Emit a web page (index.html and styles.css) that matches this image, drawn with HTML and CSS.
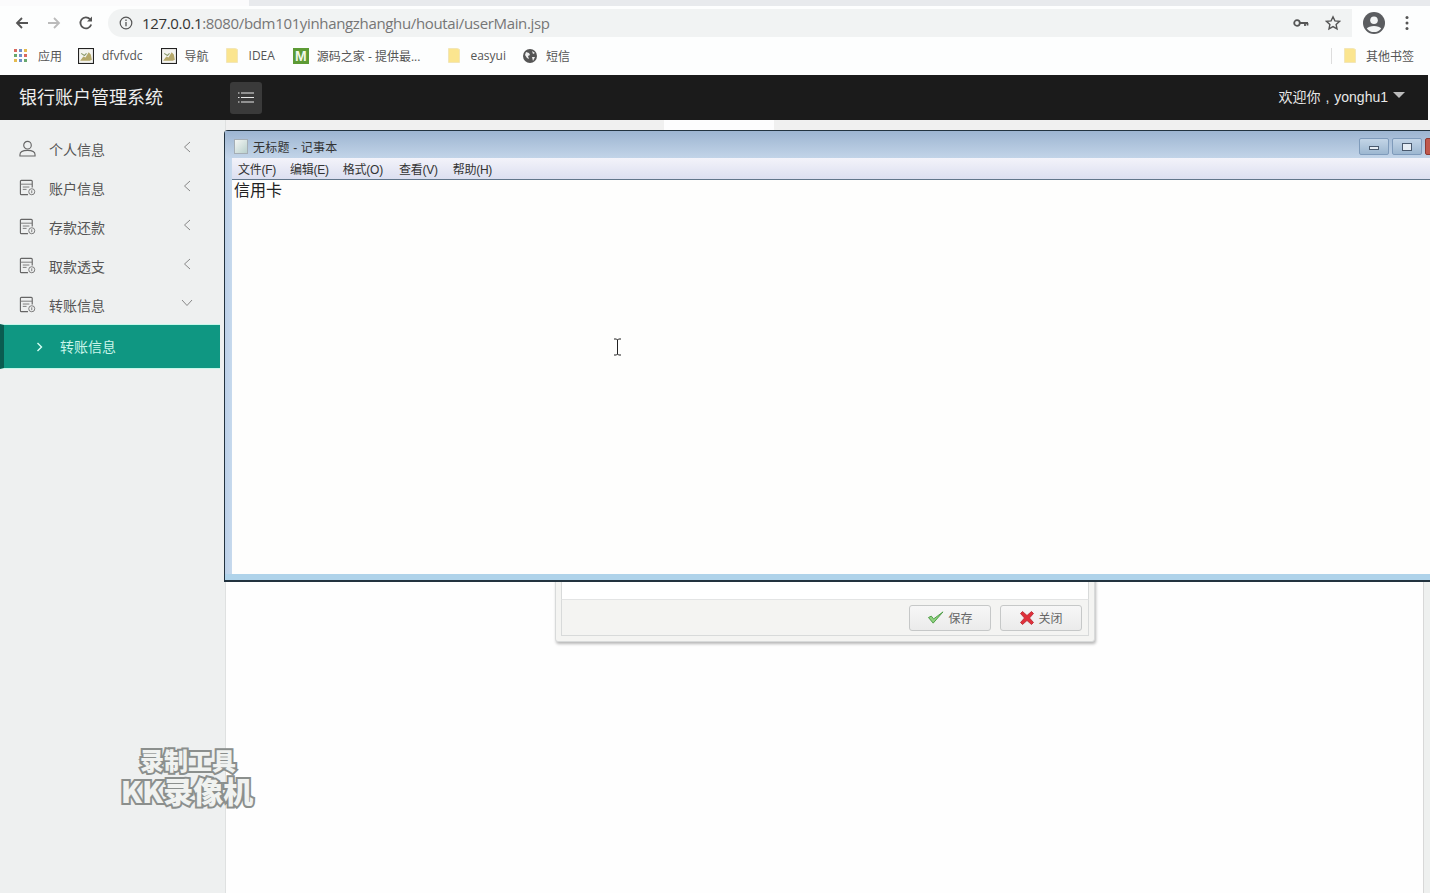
FILE: index.html
```html
<!DOCTYPE html>
<html lang="zh">
<head>
<meta charset="utf-8">
<title>银行账户管理系统</title>
<link rel="stylesheet" href="styles.css">
</head>
<body>
<svg class="defs" width="0" height="0" aria-hidden="true">
  <symbol id="doc" viewBox="0 0 18 18">
    <path d="M14 9V2.500a1 1 0 0 0-1-1H2.500a1 1 0 0 0-1 1v13a1 1 0 0 0 1 1h7" fill="none" stroke="#666" stroke-width="1.200"/>
    <path d="M1.500 5.500h12.500M4 8.500h7M4 11h4" fill="none" stroke="#777" stroke-width="1"/>
    <circle cx="13.500" cy="13.500" r="3.200" fill="none" stroke="#777" stroke-width="1"/>
    <path d="M13.500 12v3" stroke="#777" stroke-width="1"/>
  </symbol>
  <symbol id="pic" viewBox="0 0 15 15">
    <rect x=".5" y=".5" width="14" height="14" fill="#f4f4f0" stroke="#222"/>
    <path d="M2 12l3-4 2 1 3-5 2 2 1 5-2 1z" fill="#b5a86a"/>
    <path d="M3 5l3 2 2-2" fill="none" stroke="#8b9a6b"/>
  </symbol>
  <symbol id="folder" viewBox="0 0 12 15">
    <path d="M.5.5h9l2 1v13H.5z" fill="#fbe58f" stroke="#f2e6b8"/>
  </symbol>
</svg>

<div class="browser">
  <div class="tabstrip"><div class="tab"></div></div>
  <div class="toolbar">
    <svg class="nav" viewBox="0 0 16 16"><path d="M14 8H3M8 3 3 8l5 5" fill="none" stroke="#555" stroke-width="1.800"/></svg>
    <svg class="nav" viewBox="0 0 16 16"><path d="M2 8h11M8 3l5 5-5 5" fill="none" stroke="#bbb" stroke-width="1.800"/></svg>
    <svg class="nav" viewBox="0 0 16 16"><path d="M13.200 9.500A5.500 5.500 0 1 1 12 4.200" fill="none" stroke="#555" stroke-width="1.800"/><path d="M14 1.500v5H9z" fill="#555"/></svg>
    <div class="omnibox">
      <svg class="info" viewBox="0 0 14 14"><circle cx="7" cy="7" r="5.800" fill="none" stroke="#555" stroke-width="1.200"/><path d="M7 6v4.200M7 3.600v1.300" stroke="#555" stroke-width="1.300"/></svg>
      <span class="url"><span class="url-host">127.0.0.1</span>:8080/bdm101yinhangzhanghu/houtai/userMain.jsp</span>
      <svg class="key" viewBox="0 0 16 10"><circle cx="4" cy="5" r="2.800" fill="none" stroke="#555" stroke-width="1.800"/><path d="M7 5h8M12 5v3M14.500 5v2.500" stroke="#555" stroke-width="1.800"/></svg>
      <svg class="star" viewBox="0 0 16 16"><path d="M8 1.800l1.900 4.100 4.500.5-3.300 3 .9 4.500L8 11.600l-4 2.300.9-4.500-3.300-3 4.500-.5z" fill="none" stroke="#555" stroke-width="1.400"/></svg>
    </div>
    <svg class="avatar" viewBox="0 0 22 22"><circle cx="11" cy="11" r="11" fill="#5b5d60"/><circle cx="11" cy="8.300" r="3.800" fill="#f3f5f5"/><path d="M3.800 16.500c2-3.400 12.400-3.400 14.400 0a9 9 0 0 1-14.400 0z" fill="#f3f5f5"/></svg>
    <svg class="dots" viewBox="0 0 4 16"><circle cx="2" cy="2.500" r="1.500" fill="#555"/><circle cx="2" cy="8" r="1.500" fill="#555"/><circle cx="2" cy="13.500" r="1.500" fill="#555"/></svg>
  </div>
  <div class="bookmarks">
    <div class="bm bm-apps">
      <span class="apps"><i class="c1"></i><i class="c2"></i><i class="c3"></i><i class="c4"></i><i class="c2"></i><i class="c1"></i><i class="c3"></i><i class="c2"></i><i class="c4"></i></span>
      <span>应用</span>
    </div>
    <div class="bm bm-dfv"><svg class="bm-ico"><use href="#pic"/></svg><span>dfvfvdc</span></div>
    <div class="bm"><svg class="bm-ico"><use href="#pic"/></svg><span>导航</span></div>
    <div class="bm bm-idea"><svg class="bm-fold"><use href="#folder"/></svg><span>IDEA</span></div>
    <div class="bm bm-m"><span class="m-ico">M</span><span>源码之家 - 提供最...</span></div>
    <div class="bm bm-easy"><svg class="bm-fold"><use href="#folder"/></svg><span>easyui</span></div>
    <div class="bm bm-sms"><svg class="globe" viewBox="0 0 14 14"><circle cx="7" cy="7" r="7" fill="#555"/><path d="M3 3l3 1 1 2-2 1 1 3-2-1-2-3zM9 2l3 2-2 1zM9 8l3 0-2 4z" fill="#eee"/></svg><span>短信</span></div>
    <div class="bm bm-other"><svg class="bm-fold"><use href="#folder"/></svg><span>其他书签</span></div>
  </div>
</div>

<header class="topbar">
  <div class="brand">银行账户管理系统</div>
  <button class="menu-btn" aria-label="menu">
    <svg viewBox="0 0 16 11" width="16" height="11"><path d="M0 1h1.500M3 1h13M0 5.500h1.500M3 5.500h13M0 10h1.500M3 10h13" stroke="#e8e8e8" stroke-width="1.200"/></svg>
  </button>
  <div class="user"><span class="user-name">欢迎你 , yonghu1</span><span class="caret"></span></div>
</header>

<div class="body">
  <aside class="sidebar">
    <div class="item">
      <svg class="ico" viewBox="0 0 18 18"><circle cx="9" cy="5.500" r="4" fill="none" stroke="#666" stroke-width="1.200"/><path d="M1 17v-1.500c0-3 3.500-4.500 8-4.500s8 1.500 8 4.500V17z" fill="none" stroke="#666" stroke-width="1.200"/></svg>
      <span class="label">个人信息</span>
      <svg class="chev" viewBox="0 0 8 12"><path d="M7 1 1.500 6 7 11" fill="none" stroke="#888" stroke-width="1"/></svg>
    </div>
    <div class="item">
      <svg class="ico"><use href="#doc"/></svg>
      <span class="label">账户信息</span>
      <svg class="chev" viewBox="0 0 8 12"><path d="M7 1 1.500 6 7 11" fill="none" stroke="#888" stroke-width="1"/></svg>
    </div>
    <div class="item">
      <svg class="ico"><use href="#doc"/></svg>
      <span class="label">存款还款</span>
      <svg class="chev" viewBox="0 0 8 12"><path d="M7 1 1.500 6 7 11" fill="none" stroke="#888" stroke-width="1"/></svg>
    </div>
    <div class="item">
      <svg class="ico"><use href="#doc"/></svg>
      <span class="label">取款透支</span>
      <svg class="chev" viewBox="0 0 8 12"><path d="M7 1 1.500 6 7 11" fill="none" stroke="#888" stroke-width="1"/></svg>
    </div>
    <div class="item">
      <svg class="ico"><use href="#doc"/></svg>
      <span class="label">转账信息</span>
      <svg class="chev chev-down" viewBox="0 0 12 8"><path d="M1 1l5 5.500L11 1" fill="none" stroke="#888" stroke-width="1"/></svg>
    </div>
    <div class="sub-active">
      <svg class="sub-chev" viewBox="0 0 7 10"><path d="M1.500 1l4 4-4 4" fill="none" stroke="#d8fff5" stroke-width="1.400"/></svg>
      <span class="sub-label">转账信息</span>
    </div>
    <div class="watermark">
      <div class="wm-a">录制工具</div>
      <div class="wm-b">KK录像机</div>
    </div>
  </aside>

  <main class="content">
    <div class="strip"></div>
    <div class="dialog">
      <div class="dialog-foot">
        <button class="dbtn">
          <svg viewBox="0 0 18 16" width="17" height="15"><path d="M1.500 8l5 6L17 2 7 9.500 4.500 6.500z" fill="#8fd27f" stroke="#4c9a44" stroke-width="1"/></svg>
          <span>保存</span>
        </button>
        <button class="dbtn dbtn-close">
          <svg viewBox="0 0 16 16" width="16" height="16"><path d="M1.500 3.500l2-2L8 5.500l4.500-4 2 2L10.500 8l4 4.500-2 2L8 10.500l-4.500 4-2-2L5.500 8z" fill="#e0303a" stroke="#b4222c" stroke-width=".8"/></svg>
          <span>关闭</span>
        </button>
      </div>
    </div>
    <div class="notepad">
      <div class="np-title">
        <span class="np-ico"></span>
        <span class="np-name">无标题 - 记事本</span>
        <span class="np-btn"><i class="min"></i></span>
        <span class="np-btn"><i class="max"></i></span>
        <span class="np-btn np-close"></span>
      </div>
      <div class="np-inner">
        <div class="np-menu">
          <span>文件(F)</span><span>编辑(E)</span><span>格式(O)</span><span>查看(V)</span><span>帮助(H)</span>
        </div>
        <div class="np-text">信用卡</div>
      </div>
      <svg class="ibeam" viewBox="0 0 9 18" width="9" height="18"><path d="M1 1h2.500l1 1 1-1H8M4.500 2v14M1 17h2.500l1-1 1 1H8" fill="none" stroke="#222" stroke-width="1"/></svg>
    </div>
  </main>
</div>
</body>
</html>
```
FILE: styles.css
```css
* { box-sizing: border-box; }
html, body { margin: 0; height: 893px; overflow: hidden; }
body {
  width: 1430px;
  background: #fff;
  font-family: "Liberation Sans", "Noto Sans CJK SC", sans-serif;
  color: #555;
}
.defs { position: absolute; }

/* browser chrome */
.browser { height: 75px; background: #fdfefe; display: flex; flex-direction: column; }
.tabstrip { height: 6px; background: #fbfbfc; padding-left: 249px; }
.tab { height: 6px; background: #e8eaed; }
.toolbar { height: 34px; display: flex; align-items: center; padding-left: 14px; background: #fdfefe; }
.nav { width: 16px; height: 16px; margin-right: 16px; flex: none; }
.nav:nth-of-type(3) { margin-right: 14px; }
.omnibox {
  width: 1244px; height: 28px; border-radius: 14px 0 0 14px; background: #f1f3f3;
  display: flex; align-items: center; padding-left: 11px;
}
.info { width: 14px; height: 14px; flex: none; }
.url { margin-left: 9px; font: 15px/20px "Open Sans", "Liberation Sans", sans-serif; color: #767676; letter-spacing: -.34px; }
.url-host { color: #333; }
.key { width: 16px; height: 10px; margin-left: auto; }
.star { width: 16px; height: 16px; margin: 0 11px 0 16px; }
.avatar { width: 22px; height: 22px; margin-left: 11px; flex: none; }
.dots { width: 4px; height: 16px; margin-left: 20px; flex: none; }

.bookmarks { height: 35px; display: flex; align-items: center; padding: 0 16px 4px 14px; font: 12px "Open Sans", "Noto Sans CJK SC", sans-serif; color: #555; }
.bm { display: flex; align-items: center; gap: 8px; margin-right: 17px; white-space: nowrap; }
.bm-ico { width: 16px; height: 16px; flex: none; }
.bm-fold { width: 12px; height: 15px; flex: none; }
.bm-dfv { margin-right: 18px; }
.bm-idea { gap: 11px; margin-right: 18px; }
.bm-m { margin-right: 28px; }
.bm-easy { gap: 10px; }
.bm-sms { gap: 9px; }
.bm-apps { gap: 11px; margin-right: 16px; }
.apps { display: grid; grid-template-columns: repeat(3, 3px); gap: 2px; width: 13px; }
.apps i { width: 3px; height: 3px; display: block; }
.c1 { background: #d9695f; }
.c2 { background: #6f90c9; }
.c3 { background: #e5bb4f; }
.c4 { background: #67a86d; }
.m-ico { width: 16px; height: 16px; background: #5d9b35; color: #f2f8ea; font: 700 14px/16px "Liberation Sans", sans-serif; text-align: center; }
.globe { width: 14px; height: 14px; flex: none; }
.bm-other { margin: 0 0 0 auto; border-left: 1px solid #ddd; padding-left: 12px; height: 16px; gap: 10px; }

/* top bar */
.topbar { height: 45px; width: 1428px; background: #1b1b1b; display: flex; align-items: center; color: #f2f2f2; }
.brand { width: 230px; padding: 0 0 4px 19px; font-size: 18px; color: #eee; }
.menu-btn { width: 32px; height: 32px; border: 0; border-radius: 3px; background: #3a3a3a; display: flex; align-items: center; justify-content: center; padding: 0; }
.user { margin-left: auto; padding-right: 23px; font-size: 14px; display: flex; align-items: center; color: #e8e8e8; }
.user-name { padding-bottom: 4px; word-spacing: 1px; }
.caret { width: 0; height: 0; margin: 0 0 6px 5px; border-left: 6px solid transparent; border-right: 6px solid transparent; border-top: 6px solid #bbb; }

/* body */
.body { display: flex; height: 773px; }
.sidebar { width: 225px; flex: none; background: #eef0f0; padding-top: 10px; position: relative; }
.item { height: 39px; display: flex; align-items: center; padding-left: 19px; color: #555; font-size: 14px; }
.ico { width: 17px; height: 17px; flex: none; margin-top: -2px; }
.label { margin: -2px 0 0 13px; width: 134px; }
.chev { width: 8px; height: 12px; margin-top: -5px; }
.chev-down { width: 12px; height: 8px; margin: -6px 0 0 -2px; }
.sub-active {
  width: 220px; height: 45px; margin-top: -1px;
  background: #0f9782; border-top: 1px solid #c6f7ea; border-bottom: 1px solid #c6f7ea; border-left: 4px solid #0a5c50;
  display: flex; align-items: center; padding-left: 32px; color: #c9f5ea; font-size: 14px; gap: 17px;
}
.sub-chev { width: 7px; height: 10px; }
.sub-label { margin-top: -2px; }
.watermark { position: absolute; z-index: 3; left: 120px; top: 626px; width: 136px; text-align: center; font-family: "Noto Sans CJK SC", sans-serif; font-weight: 900; color: #f0f2f0; -webkit-text-stroke: 4px #8b8f8d; paint-order: stroke fill; }
.wm-a { font-size: 24px; line-height: 28px; }
.wm-b { font-size: 30px; line-height: 33px; white-space: nowrap; margin-left: -2px; }

.content { flex: 1; position: relative; border-left: 1px solid #dfe1e1; background: #fefefe; }
.content::before { content: ""; position: absolute; right: 0; top: 0; bottom: 0; width: 6px; background: #eef0ef; border-left: 1px solid #d8d8d8; }
.strip { height: 10px; background: #f0f0f0; position: relative; }
.strip::after { content: ""; position: absolute; left: 438px; top: 0; width: 110px; height: 10px; background: #fdfdfe; }

.dialog {
  position: absolute; left: 329px; top: 300px; width: 540px; height: 222px;
  background: #f4f4f2; border: 1px solid #d8dada; border-radius: 3px; padding: 0 5px 5px;
  box-shadow: 1px 2px 3px #b8b8b8; display: flex; flex-direction: column; justify-content: flex-end;
}
.dialog-foot { height: 37px; border: 1px solid #d8dada; border-top-color: #e3e4e4; display: flex; align-items: center; justify-content: flex-end; gap: 9px; padding-right: 6px; background: #f4f4f2; position: relative; }
.dialog::before { content: ""; position: absolute; left: 5px; right: 5px; top: 0; bottom: 41px; background: #fff; border-left: 1px solid #d8dada; border-right: 1px solid #d8dada; }
.dbtn { width: 82px; height: 26px; border: 1px solid #c6c8c8; border-radius: 3px; background: linear-gradient(#f7f7f7, #ebebeb); display: flex; align-items: center; justify-content: center; gap: 4px; font: 12px "Noto Sans CJK SC", sans-serif; color: #666; padding: 0; }
.dbtn-close { gap: 3px; }

.notepad {
  position: absolute; left: -2px; top: 10px; width: 1208px; height: 452px;
  border: 1px solid #22333f; border-right: 0; border-bottom-width: 2px; border-radius: 4px 0 0 0;
  background: linear-gradient(90deg, #bcd0e8 0, #c8dbee 8px);
  padding: 0 0 6px 7px;
  display: flex; flex-direction: column;
}
.notepad::before { content: ""; position: absolute; left: 0; right: 0; bottom: 0; height: 6px; background: #afd3ea; }
.np-title { height: 27px; margin-left: -7px; padding: 4px 0 0 9px; flex: none; display: flex; align-items: center; background: linear-gradient(#9db5d1, #c2d4e8); font-size: 12px; color: #333; }
.np-ico { width: 14px; height: 15px; border: 1px solid #a5aeb5; background: linear-gradient(135deg, #f4f6f4, #b9d0cc); margin-right: 5px; }
.np-name { flex: 1; letter-spacing: .2px; }
.np-btn { width: 30px; height: 17px; margin-right: 3px; border: 1px solid #7f9bbb; border-radius: 2px; background: linear-gradient(#c3d5e7, #9db7d0); display: flex; align-items: center; justify-content: center; }
.np-btn i { display: block; border: 1px solid #4a5a6e; background: #e6edf4; }
.min { width: 10px; height: 4px; margin-top: 3px; }
.max { width: 10px; height: 8px; }
.np-close { width: 11px; margin-right: -4px; background: #c0584c; border-color: #8e3a32; }
.np-inner { flex: 1; position: relative; display: flex; flex-direction: column; background: #fefefd; }
.np-menu { height: 22px; flex: none; display: flex; gap: 14px; align-items: center; padding-left: 6px; font-size: 12px; letter-spacing: -.25px; color: #333; background: linear-gradient(#f3f3fa, #dcdff0); border-bottom: 1px solid #61758a; }
.np-menu span:nth-child(4) { margin-left: 2px; }
.np-menu span:nth-child(5) { margin-left: 1px; }
.np-text { padding: 1px 2px 0; font-size: 16px; line-height: 20px; color: #222; }
.ibeam { position: absolute; left: 388px; top: 207px; }
```
